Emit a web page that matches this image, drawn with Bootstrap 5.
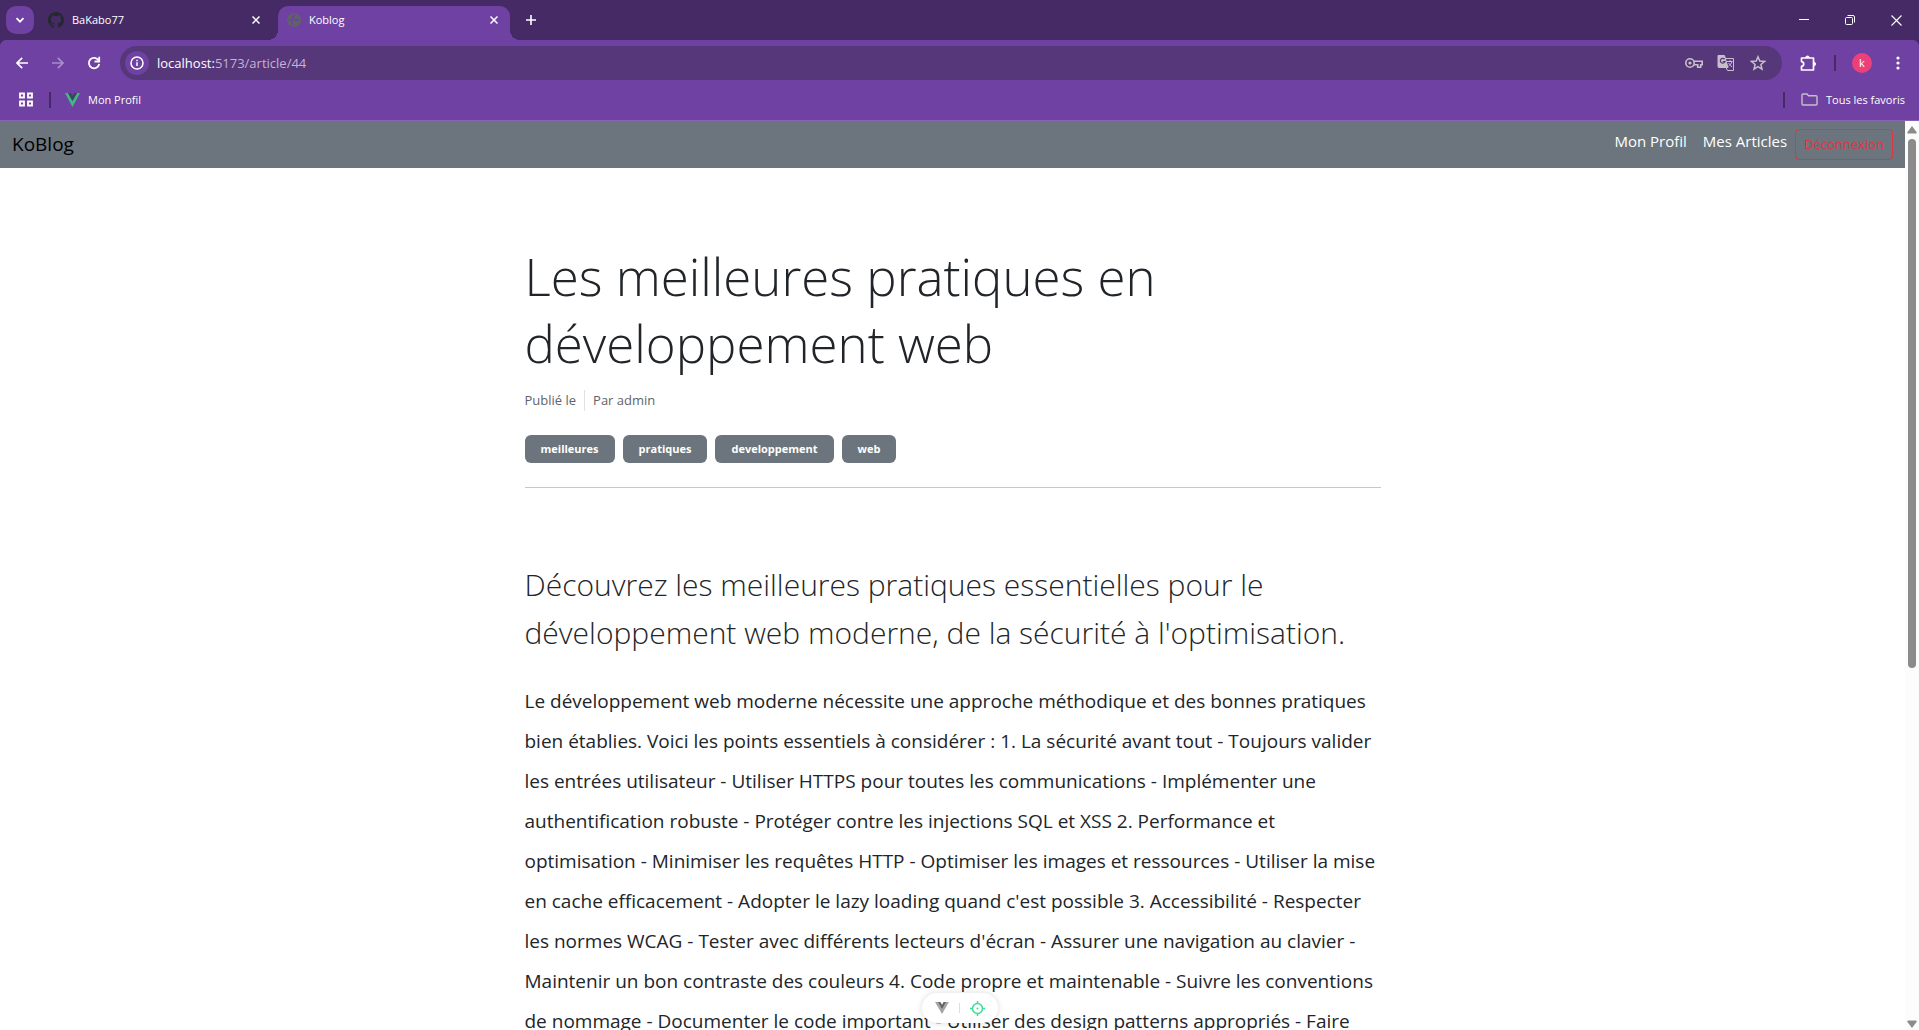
<!DOCTYPE html>
<html lang="fr">
<head>
<meta charset="utf-8">
<meta name="viewport" content="width=device-width, initial-scale=1">
<title>Koblog</title>
<link href="https://cdn.jsdelivr.net/npm/bootstrap@5.3.0/dist/css/bootstrap.min.css" rel="stylesheet">
<style>
:root { --strip: #462a66; --bar: #6e41a2; --omni: #563779; }
body { font-family: "Open Sans", "Noto Sans", sans-serif; height: 100vh; overflow: hidden; }
svg { display: block; flex: none; }
.chrome { font-size: 11px; line-height: 16px; color: #fff; background: var(--bar); }
.chrome button { border: 0; background: none; color: inherit; padding: 0; display: flex; align-items: center; justify-content: center; flex: none; }
.chrome a { color: inherit; text-decoration: none; }
.strip { background: var(--strip); height: 40px; }
.chrome .tab-menu { width: 28px; height: 28px; margin: 6px; border-radius: 10px; background: var(--bar); }
.browser-tab { height: 34px; width: 230px; padding: 0 10px 6px 8px; }
.browser-tab.current { width: 232px; background: var(--bar); border-radius: 10px 10px 0 0; padding: 0 12px 6px 9px; position: relative; }
.browser-tab.current::before, .browser-tab.current::after { content: ""; position: absolute; bottom: 0; width: 10px; height: 10px; }
.browser-tab.current::before { right: 100%; background: radial-gradient(circle at 0 0, transparent 10px, var(--bar) 10px); }
.browser-tab.current::after { left: 100%; background: radial-gradient(circle at 100% 0, transparent 10px, var(--bar) 10px); }
.chrome .win-btn { width: 46px; height: 40px; }
.tools { height: 46px; padding: 0 3px 0 4px; background: radial-gradient(circle at 8px 8px, var(--bar) 8px, var(--strip) 9px) 0 0 / 8px 8px no-repeat, radial-gradient(circle at 0 8px, var(--bar) 8px, var(--strip) 9px) 100% 0 / 8px 8px no-repeat; }
.chrome .tool-btn { width: 36px; height: 34px; }
.omnibox { background: var(--omni); border-radius: 17px; height: 34px; padding: 0 8px 0 5px; margin-left: 8px; color: #c7bfca; }
.chrome .site-info { width: 24px; height: 24px; border-radius: 50%; background: var(--bar); color: #fff; }
.address { font-size: 13px; line-height: 20px; color: #c3b3d6; margin-left: 8px; }
.address b { font-weight: 400; color: #fff; }
.chrome .omni-btn { width: 32px; height: 32px; }
.sep { width: 2px; height: 16px; background: var(--strip); }
.chrome .avatar { width: 20px; height: 20px; border-radius: 50%; background: #ec407a; }
.favs { height: 35px; padding: 0 14px 7px 18px; border-bottom: 1px solid #8961b6; }
.fav-first { margin-left: 14px; }
.viewport { min-height: 0; }
.page { overflow: hidden; min-width: 0; }
.navbar-brand.site { font-size: 19px; line-height: 31px; padding: 0; color: #000; }
.site-nav { padding: 8px 12px; background: #6c757d; }
.site-nav .nav-link { padding: 0; line-height: 24px; font-size: 15px; font-weight: 500; color: #fff; }
.site-nav .btn { font-size: 13px; line-height: 21px; padding: 4px 8px; }
.article { padding-top: 75px; padding-bottom: 24px; }
.article h1 { font-size: 51px; line-height: 67px; font-weight: 300; margin-bottom: 13px; }
.meta { font-size: 13px; line-height: 21px; color: #5f6469; }
.tag { font-size: 11px; line-height: 12px; padding: 8px 16px; font-weight: 700; }
.rule { border-bottom: 1px solid #c7c8ca; }
.intro { font-size: 30px; line-height: 48px; font-weight: 300; padding-top: 73px; margin-bottom: 24px; }
.content { font-size: 19px; line-height: 40px; }
.scroller { width: 14px; background: #fcfcfc; padding: 5px 0 2px; }
.thumb { width: 8px; height: 58.6%; border-radius: 4px; background: #8b8b8b; margin: 5px 0 auto; }
.devtools { position: absolute; left: 50%; bottom: 7px; transform: translateX(-50%); background: #fff; border-radius: 15px; height: 30px; width: 76px; gap: 10px; box-shadow: 0 0 6px rgba(0,0,0,.15); }
.devtools button { border: 0; background: none; padding: 0; }
.devtools .split { width: 1px; height: 10px; background: #ddd; }
</style>
</head>
<body class="d-flex flex-column">
<header class="chrome flex-shrink-0">
  <div class="strip d-flex">
    <button class="tab-menu" aria-label="Rechercher des onglets"><svg width="10" height="10" viewBox="0 0 10 10" fill="none" stroke="currentColor" stroke-width="1.8"><path d="M1.5 3.2 5 6.7l3.5-3.5"/></svg></button>
    <div class="browser-tab d-flex align-items-center align-self-end me-2">
      <svg width="16" height="16" viewBox="0 0 16 16" fill="#24292f"><path d="M8 0C3.58 0 0 3.58 0 8c0 3.54 2.29 6.53 5.47 7.59.4.07.55-.17.55-.38v-1.49c-2.01.37-2.53-.49-2.69-.94-.09-.23-.48-.94-.82-1.13-.28-.15-.68-.52-.01-.53.63-.01 1.08.58 1.23.82.72 1.21 1.87.87 2.33.66.07-.52.28-.87.51-1.07-1.78-.2-3.64-.89-3.64-3.95 0-.87.31-1.59.82-2.15-.08-.2-.36-1.02.08-2.12 0 0 .67-.21 2.2.82a7.6 7.6 0 0 1 4 0c1.53-1.04 2.2-.82 2.2-.82.44 1.1.16 1.92.08 2.12.51.56.82 1.27.82 2.15 0 3.07-1.87 3.75-3.65 3.95.29.25.54.73.54 1.48v2.2c0 .21.15.46.55.38A8 8 0 0 0 16 8c0-4.42-3.58-8-8-8z"/></svg>
      <span class="ms-2 flex-grow-1">BaKabo77</span>
      <button aria-label="Fermer"><svg width="8" height="8" viewBox="0 0 8 8" stroke="currentColor" stroke-width="1.5"><path d="m.5.5 7 7m0-7-7 7"/></svg></button>
    </div>
    <div class="browser-tab current d-flex align-items-center align-self-end">
      <svg width="14" height="14" viewBox="0 0 14 14"><circle cx="7" cy="7" r="7" fill="#5f6368"/><path d="M8.200 1.600C6.500 2 7.200 3.600 5.800 4.200c-1 .5-.5 1.800.8 1.700 1.500-.1 1.200 1.300 2.600 1.300 1.200 0 1.500-1 3-.9M1.500 7c1.700-.3 3.700 0 4.300 1.300.4 1.200-1 1.300-.8 2.500.1.800.8 1 1 1.700" fill="none" stroke="var(--bar)" stroke-width="1.500"/></svg>
      <span class="ms-2 flex-grow-1">Koblog</span>
      <button aria-label="Fermer"><svg width="8" height="8" viewBox="0 0 8 8" stroke="currentColor" stroke-width="1.5"><path d="m.5.5 7 7m0-7-7 7"/></svg></button>
    </div>
    <button class="ms-3 align-self-center" aria-label="Nouvel onglet"><svg width="10" height="10" viewBox="0 0 10 10" stroke="currentColor" stroke-width="1.6"><path d="M5 0v10M0 5h10"/></svg></button>
    <div class="ms-auto d-flex">
      <button class="win-btn" aria-label="Réduire"><svg width="10" height="10" viewBox="0 0 10 10" stroke="currentColor"><path d="M0 4.500h10"/></svg></button>
      <button class="win-btn" aria-label="Restaurer"><svg width="10" height="10" viewBox="0 0 10 10" fill="none" stroke="currentColor"><rect x=".5" y="2.5" width="7" height="7" rx="1"/><path d="M2.5.5H8A1.5 1.5 0 0 1 9.500 2v5.500"/></svg></button>
      <button class="win-btn" aria-label="Fermer la fenêtre"><svg width="11" height="11" viewBox="0 0 11 11" stroke="currentColor" stroke-width="1.1"><path d="m.5.5 10 10m0-10-10 10"/></svg></button>
    </div>
  </div>
  <div class="tools d-flex align-items-center">
    <button class="tool-btn" aria-label="Retour"><svg width="12" height="12" viewBox="0 0 12 12" fill="none" stroke="currentColor" stroke-width="1.7"><path d="M12 6H1.500M6.200.8 1 6l5.200 5.200"/></svg></button>
    <button class="tool-btn" aria-label="Avancer"><svg width="12" height="12" viewBox="0 0 12 12" fill="none" stroke="#a88dc8" stroke-width="1.700"><path d="M0 6h10.500M5.800.8 11 6l-5.200 5.200"/></svg></button>
    <button class="tool-btn" aria-label="Actualiser"><svg width="14" height="14" viewBox="0 0 14 14" fill="none" stroke="currentColor" stroke-width="1.8"><path d="M11.600 4.500A5.200 5.200 0 1 0 12.200 8"/><path d="M12.200.8v4.700H7.500"/></svg></button>
    <div class="omnibox flex-grow-1 d-flex align-items-center">
      <button class="site-info" aria-label="Infos du site"><svg width="14" height="14" viewBox="0 0 14 14" fill="none" stroke="currentColor" stroke-width="1.500"><circle cx="7" cy="7" r="6"/><path d="M7 6.200V10M7 3.700v1.500"/></svg></button>
      <span class="address flex-grow-1"><b>localhost:</b>5173/article/44</span>
      <button class="omni-btn" aria-label="Mots de passe"><svg width="18" height="12" viewBox="0 0 18 12" fill="none" stroke="currentColor" stroke-width="1.600"><circle cx="5" cy="6" r="4.200"/><circle cx="5" cy="6" r="1.600" fill="currentColor" stroke="none"/><path d="M9 4.300h8.200v3.500h-1.500v2.400h-3V7.800H9"/></svg></button>
      <button class="omni-btn" aria-label="Traduire"><svg width="18" height="18" viewBox="0 0 18 18" fill="none" stroke="currentColor"><path d="M8.500 4.500h8v12h-6l-1.500-3" /><path d="M1 1.500h6.500l3.500 12H2a1 1 0 0 1-1-1z" fill="currentColor"/><path d="M7.600 5.200a2.400 2.400 0 1 0 .4 2.300H5.800" stroke="var(--omni)" stroke-width="1.200"/><path d="M10 7.500h5.500M13 6v1.500M15 7.500c-.5 2-2 3.500-3.500 4.500M11.500 9l3.500 4"/></svg></button>
      <button class="omni-btn" aria-label="Ajouter aux favoris"><svg width="16" height="16" viewBox="0 0 16 16" fill="none" stroke="currentColor" stroke-width="1.500"><path d="m8 1.800 1.800 4.300 4.700.4-3.600 3 1.100 4.600L8 11.700l-4 2.400 1.100-4.600-3.600-3 4.700-.4z"/></svg></button>
    </div>
    <button class="tool-btn ms-2" aria-label="Extensions"><svg width="17" height="17" viewBox="0 0 17 17" fill="none" stroke="currentColor" stroke-width="1.700"><path d="M1.500 3h12v12h-12v-3.600c3-.5 3-4.300 0-4.800z" stroke-linejoin="round"/><path d="M5.500 3a2 2 0 0 1 4 0M13.500 7a2 2 0 0 1 0 4" fill="currentColor" stroke-width="1"/></svg></button>
    <span class="sep ms-2"></span>
    <button class="avatar ms-3" aria-label="Profil">k</button>
    <button class="tool-btn ms-2" aria-label="Menu"><svg width="4" height="14" viewBox="0 0 4 14" fill="currentColor"><circle cx="2" cy="2" r="1.600"/><circle cx="2" cy="7" r="1.600"/><circle cx="2" cy="12" r="1.600"/></svg></button>
  </div>
  <div class="favs d-flex align-items-center">
    <button aria-label="Applications"><svg width="15" height="15" viewBox="0 0 15 15" fill="none" stroke="currentColor" stroke-width="1.800"><path d="M2 1.500h4v4H2zm8 0h4v4h-4zm-8 8h4v4H2zm8 0h4v4h-4z"/></svg></button>
    <span class="sep ms-3"></span>
    <a href="#" class="fav-first d-flex align-items-center gap-2"><svg width="15" height="14" viewBox="0 0 15 14"><path d="M0 0h3l4.500 8L12 0h3L7.500 14z" fill="#41b883"/><path d="M3 0h2.800l1.700 3L9.200 0H12L7.500 8z" fill="#35495e"/></svg>Mon Profil</a>
    <span class="sep ms-auto me-3"></span>
    <a href="#" class="d-flex align-items-center gap-2"><svg width="17" height="13" viewBox="0 0 17 13" fill="none" stroke="#c7bfca" stroke-width="1.400"><path d="M1 2a1 1 0 0 1 1-1h4l1.500 1.700H15a1 1 0 0 1 1 1V11a1 1 0 0 1-1 1H2a1 1 0 0 1-1-1z"/></svg>Tous les favoris</a>
  </div>
</header>
<div class="viewport d-flex flex-grow-1 position-relative">
  <div class="page flex-grow-1">
    <nav class="site-nav d-flex align-items-start">
      <a class="navbar-brand site m-0" href="#">KoBlog</a>
      <div class="d-flex ms-auto">
        <a class="nav-link me-3" href="#">Mon Profil</a>
        <a class="nav-link me-2" href="#">Mes Articles</a>
        <button class="btn btn-sm btn-outline-danger">Déconnexion</button>
      </div>
    </nav>
    <main class="container">
      <div class="row justify-content-center">
        <article class="article col-lg-8">
          <h1>Les meilleures pratiques en développement web</h1>
          <div class="meta d-flex mb-4"><span class="pe-2 border-end">Publié le</span><span class="ps-2">Par admin</span></div>
          <div class="rule d-flex gap-2 pb-4"><span class="badge bg-secondary tag">meilleures</span><span class="badge bg-secondary tag">pratiques</span><span class="badge bg-secondary tag">developpement</span><span class="badge bg-secondary tag">web</span></div>
          <p class="intro">Découvrez les meilleures pratiques essentielles pour le développement web moderne, de la sécurité à l'optimisation.</p>
          <p class="content">Le développement web moderne nécessite une approche méthodique et des bonnes pratiques bien établies. Voici les points essentiels à considérer : 1. La sécurité avant tout - Toujours valider les entrées utilisateur - Utiliser HTTPS pour toutes les communications - Implémenter une authentification robuste - Protéger contre les injections SQL et XSS 2. Performance et optimisation - Minimiser les requêtes HTTP - Optimiser les images et ressources - Utiliser la mise en cache efficacement - Adopter le lazy loading quand c'est possible 3. Accessibilité - Respecter les normes WCAG - Tester avec différents lecteurs d'écran - Assurer une navigation au clavier - Maintenir un bon contraste des couleurs 4. Code propre et maintenable - Suivre les conventions de nommage - Documenter le code important - Utiliser des design patterns appropriés - Faire</p>
        </article>
      </div>
    </main>
  </div>
  <div class="scroller d-flex flex-column align-items-center">
    <svg width="10" height="8" viewBox="0 0 10 8" fill="#8b8b8b"><path d="M5 0 9.500 6a1 1 0 0 1-.8 1.500H1.300A1 1 0 0 1 .5 6z"/></svg>
    <div class="thumb"></div>
    <svg width="10" height="8" viewBox="0 0 10 8" fill="#8b8b8b"><path d="M5 8 .5 2A1 1 0 0 1 1.300.5h7.400A1 1 0 0 1 9.500 2z"/></svg>
  </div>
  <div class="devtools d-flex align-items-center justify-content-center">
    <button aria-label="Vue DevTools"><svg width="14" height="12" viewBox="0 0 15 13"><path d="M0 0h3l4.500 8L12 0h3L7.500 13z" fill="#a5a5a5"/><path d="M3 0h2.800l1.700 3L9.200 0H12L7.500 8z" fill="#666"/></svg></button>
    <span class="split"></span>
    <button aria-label="Inspecteur"><svg width="15" height="15" viewBox="0 0 15 15" fill="none" stroke="#3ddc97" stroke-width="1.500"><circle cx="7.500" cy="7.500" r="5"/><path d="M7.500 0v3M7.500 12v3M0 7.500h3M12 7.500h3"/><circle cx="7.500" cy="7.500" r="1" fill="#3ddc97" stroke="none"/></svg></button>
  </div>
</div>
<script src="https://cdn.jsdelivr.net/npm/bootstrap@5.3.0/dist/js/bootstrap.bundle.min.js"></script>
</body>
</html>
